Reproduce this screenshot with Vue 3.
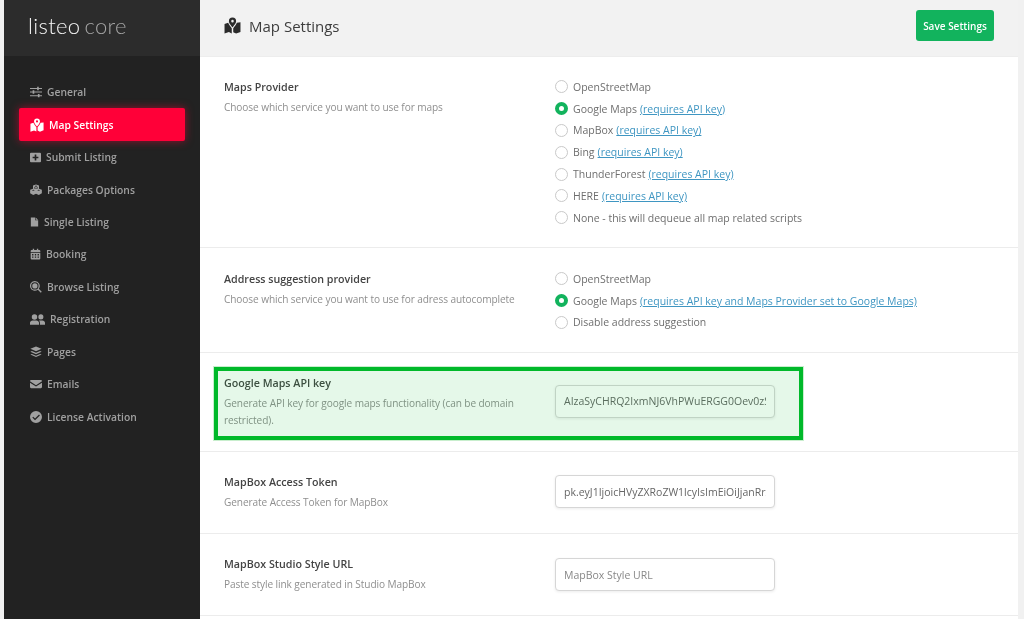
<script setup>
const menu = [
  { label: 'General', icon: 'sliders' },
  { label: 'Map Settings', icon: 'map', active: true },
  { label: 'Submit Listing', icon: 'plus' },
  { label: 'Packages Options', icon: 'cubes' },
  { label: 'Single Listing', icon: 'file' },
  { label: 'Booking', icon: 'calendar' },
  { label: 'Browse Listing', icon: 'search' },
  { label: 'Registration', icon: 'users' },
  { label: 'Pages', icon: 'layers' },
  { label: 'Emails', icon: 'mail' },
  { label: 'License Activation', icon: 'check' }
]
const providers = [
  { name: 'OpenStreetMap' },
  { name: 'Google Maps', link: '(requires API key)', on: true },
  { name: 'MapBox', link: '(requires API key)' },
  { name: 'Bing', link: '(requires API key)' },
  { name: 'ThunderForest', link: '(requires API key)' },
  { name: 'HERE', link: '(requires API key)' },
  { name: 'None - this will dequeue all map related scripts' }
]
const suggest = [
  { name: 'OpenStreetMap' },
  { name: 'Google Maps', link: '(requires API key and Maps Provider set to Google Maps)', on: true },
  { name: 'Disable address suggestion' }
]
</script>

<template>
  <div class="page">
    <aside class="side">
      <div class="brand"><span class="b1">listeo</span><span class="b2">core</span></div>
      <nav class="nav">
        <a v-for="m in menu" :key="m.label" class="item" :class="{ active: m.active }">
          <svg class="ic" :class="'ic-' + m.icon" viewBox="0 0 16 16" fill="currentColor">
            <template v-if="m.icon === 'sliders'">
              <path d="M0 2.600h16v1.300H0zM0 7.400h16v1.300H0zM0 12.200h16v1.300H0z"/>
              <path d="M9.500 1h2.200v4.500H9.500zM3.500 5.800h2.200v4.500H3.500zM10.500 10.600h2.200v4.500h-2.200z"/>
            </template>
            <path v-else-if="m.icon === 'map'" d="M8 0.500a3.400 3.400 0 0 0-3.400 3.400C4.600 6 8 9.600 8 9.600s3.400-3.600 3.400-5.700A3.400 3.400 0 0 0 8 .5zm0 2.200a1.200 1.200 0 1 1 0 2.400 1.200 1.200 0 0 1 0-2.400zM0.500 6.600l3.400-1.200c.8 2 2.400 3.800 3.400 5.100v5L4.600 14.200.5 15.600zM15.500 5v9l-4.100 1.600-2.700-1.200v-3.900c1-1.300 2.700-3.100 3.400-5.100z"/>
            <path v-else-if="m.icon === 'plus'" fill-rule="evenodd" d="M1.500 1h13A1.500 1.500 0 0 1 16 2.500v11a1.500 1.500 0 0 1-1.500 1.500h-13A1.500 1.500 0 0 1 0 13.500v-11A1.500 1.500 0 0 1 1.500 1zM6.800 3.800v3H3.800v2.400h3v3h2.400v-3h3V6.800h-3v-3z"/>
            <path v-else-if="m.icon === 'cubes'" fill-rule="evenodd" d="M8 .5l4 1.500v4.200l3.800 1.500v4.700L11.700 14.500 8 12.900l-3.700 1.600L.2 12.400V7.700L4 6.200V2zM8 2.100L6 2.900l2 .8 2-.8zM4.400 7.500l-2 .8 2 .8 2-.8zm7.200 0l-2 .8 2 .8 2-.8zM5.500 5.800L7.400 6.600V5L5.500 4.200zm5 0V4.200L8.600 5v1.600z"/>
            <path v-else-if="m.icon === 'file'" d="M1.500 0H9v5h5.500v11h-13zM10 0l4.500 4H10z"/>
            <path v-else-if="m.icon === 'calendar'" fill-rule="evenodd" d="M4 .2h2V2h4V.2h2V2h1.500A1.500 1.500 0 0 1 15 3.500V5H1V3.500A1.500 1.500 0 0 1 2.500 2H4zM1 6h14v8.500a1.500 1.500 0 0 1-1.500 1.500h-11A1.500 1.500 0 0 1 1 14.500zm2 2v2h2V8zm4 0v2h2V8zm4 0v2h2V8zm-8 3.500v2h2v-2zm4 0v2h2v-2zm4 0v2h2v-2z"/>
            <path v-else-if="m.icon === 'search'" fill-rule="evenodd" d="M6.500 0a6.500 6.500 0 0 1 5.200 10.400l4 4-1.300 1.300-4-4A6.500 6.500 0 1 1 6.500 0zm0 1.600a4.900 4.900 0 1 0 0 9.800 4.900 4.900 0 0 0 0-9.800zM6.500 3a3.500 3.500 0 1 1 0 7 3.500 3.500 0 0 1 0-7z"/>
            <path v-else-if="m.icon === 'users'" d="M4.800 2.500a2.900 2.900 0 1 1 0 5.800 2.900 2.900 0 0 1 0-5.800zM11.600 2.500a2.700 2.700 0 1 1 0 5.400 2.700 2.700 0 0 1 0-5.400zM0 13.500v-2C0 10 1.300 9 2.800 9h4C8.300 9 9.600 10 9.600 11.500v2zM10.600 13.500v-2c0-.9-.4-1.800-1-2.400.4-.1.8-.1 1.300-.1h2.300C14.700 9 16 10 16 11.500v2z"/>
            <path v-else-if="m.icon === 'layers'" d="M8 .5l7.500 3.300L8 7.100.5 3.800zM2.600 6.700L8 9.100l5.400-2.400 2.100.9L8 11 .5 7.600zM2.600 10.500L8 12.900l5.400-2.400 2.100.9L8 14.800.5 11.400z"/>
            <path v-else-if="m.icon === 'mail'" d="M1.500 2.500h13A1.500 1.500 0 0 1 16 4v.4L8 9.600 0 4.400V4a1.500 1.500 0 0 1 1.500-1.500zM0 6.200l8 5.200 8-5.200V12a1.500 1.500 0 0 1-1.500 1.500h-13A1.500 1.500 0 0 1 0 12z"/>
            <path v-else fill-rule="evenodd" d="M8 0a8 8 0 1 1 0 16A8 8 0 0 1 8 0zm4 4.700L6.700 10 4.300 7.600 3.100 8.800l3.600 3.600 6.500-6.500z"/>
          </svg>
          <span>{{ m.label }}</span>
        </a>
      </nav>
    </aside>

    <main class="main">
      <header class="head">
        <h1 class="title">
          <svg class="title-ic" viewBox="0 0 16 16" fill="currentColor"><path d="M8 0.500a3.400 3.400 0 0 0-3.400 3.400C4.600 6 8 9.600 8 9.600s3.400-3.600 3.400-5.700A3.400 3.400 0 0 0 8 .5zm0 2.200a1.200 1.200 0 1 1 0 2.400 1.200 1.200 0 0 1 0-2.400zM0.500 6.600l3.400-1.200c.8 2 2.400 3.800 3.400 5.100v5L4.600 14.200.5 15.600zM15.500 5v9l-4.100 1.600-2.700-1.200v-3.900c1-1.300 2.700-3.100 3.400-5.100z"/></svg>
          Map Settings
        </h1>
        <button class="save">Save Settings</button>
      </header>

      <section class="row r1">
        <div class="lab"><h3>Maps Provider</h3><p>Choose which service you want to use for maps</p></div>
        <div class="radios">
          <label v-for="p in providers" :key="p.name" class="radio">
            <i class="dot" :class="{ on: p.on }"></i>
            <span>{{ p.name }}</span>
            <a v-if="p.link">{{ p.link }}</a>
          </label>
        </div>
      </section>

      <section class="row r2">
        <div class="lab"><h3>Address suggestion provider</h3><p>Choose which service you want to use for adress autocomplete</p></div>
        <div class="radios">
          <label v-for="p in suggest" :key="p.name" class="radio">
            <i class="dot" :class="{ on: p.on }"></i>
            <span>{{ p.name }}</span>
            <a v-if="p.link">{{ p.link }}</a>
          </label>
        </div>
      </section>

      <section class="row r3">
        <div class="lab"><h3>Google Maps API key</h3><p>Generate API key for google maps functionality (can be domain restricted).</p></div>
        <input class="inp" readonly value="AIzaSyCHRQ2IxmNJ6VhPWuERGG0Oev0zSkX4bLk" />
        <div class="mark"></div>
      </section>

      <section class="row r4">
        <div class="lab"><h3>MapBox Access Token</h3><p>Generate Access Token for MapBox</p></div>
        <input class="inp" readonly value="pk.eyJ1IjoicHVyZXRoZW1lcyIsImEiOiJjanRrZ2J4" />
      </section>

      <section class="row r5">
        <div class="lab"><h3>MapBox Studio Style URL</h3><p>Paste style link generated in Studio MapBox</p></div>
        <input class="inp" placeholder="MapBox Style URL" />
      </section>
    </main>
  </div>
</template>

<style>
html, body { margin: 0; background: #fff; }
</style>

<style scoped>
.page {
  display: flex;
  width: 1024px;
  height: 619px;
  overflow: hidden;
  box-sizing: border-box;
  padding: 0 6px 0 4px;
  background: #f1f1f1;
  font-family: "Open Sans", "Noto Sans", sans-serif;
  font-size: 10.500px;
  filter: blur(.3px);
}
.side { width: 196px; flex: none; background: #222; }
.brand {
  height: 56px;
  box-sizing: border-box;
  padding: 11px 0 0 24px;
  background: #2c2c2c;
  font-family: Lato, sans-serif;
  font-weight: 300;
  font-size: 22px;
  line-height: 30px;
  letter-spacing: .35px;
  display: flex;
  gap: 4px;
}
.b1 { color: #f6f6f6; }
.b2 { color: #a5a5a5; }
.nav { display: flex; flex-direction: column; padding: 20px 15px 0; }
.item {
  height: 32.450px;
  display: flex;
  align-items: center;
  gap: 5px;
  padding-left: 11px;
  color: #a0a0a0;
  font-size: 10.300px;
  font-weight: 600;
  border-radius: 2px;
  white-space: nowrap;
}
.item.active {
  background: #ff0038;
  color: #fff;
  box-shadow: 0 0 8px rgba(255, 0, 56, .55);
}
.ic { width: 12px; height: 12px; flex: none; }
.ic-map { width: 14px; height: 14px; }
.ic-plus { width: 11px; height: 11px; }
.ic-file { width: 9px; height: 12px; }
.ic-calendar { width: 11px; height: 12px; }
.ic-users { width: 15px; height: 15px; margin-right: 0; }
.ic-search { width: 12px; height: 12px; }

.main { width: 818px; flex: none; background: #fff; }
.head {
  height: 57px;
  box-sizing: border-box;
  border-bottom: 1px solid #ededed;
  background: #f2f2f2;
  display: flex;
  align-items: center;
  justify-content: space-between;
  padding: 0 24px 5px;
}
.title {
  margin: 0;
  display: flex;
  align-items: center;
  gap: 8px;
  font-size: 15px;
  font-weight: 400;
  color: #3d3d3d;
}
.title-ic { width: 17px; height: 17px; color: #2b2b2b; }
.save {
  width: 78px;
  height: 31px;
  padding: 0;
  border: 0;
  border-radius: 3px;
  background: #12b35d;
  color: #fff;
  font: 600 10px "Open Sans", sans-serif;
}

.row {
  position: relative;
  display: flex;
  align-items: center;
  box-sizing: border-box;
  padding: 0 24px;
  border-bottom: 1px solid #ececec;
}
.r1 { height: 191px; }
.r2 { height: 105px; }
.r3 { height: 99px; }
.r4 { height: 82px; }
.r5 { height: 82px; }
.lab { width: 331px; flex: none; align-self: flex-start; padding: 22px 30px 0 0; box-sizing: border-box; }
.r2 .lab { padding-top: 23px; }
.lab h3 { margin: 0; font-size: 10.700px; line-height: 16px; font-weight: 600; color: #444; }
.lab p { margin: 4px 0 0; line-height: 17px; color: #8f8f8f; font-size: 10.100px; letter-spacing: -.09px; }
.radios { display: flex; flex-direction: column; align-self: flex-start; padding-top: 19px; }
.r2 .radios { padding-top: 20px; }
.radio { display: flex; align-items: center; height: 21.800px; color: #6e6e6e; white-space: nowrap; }
.radio a { margin-left: 3px; color: #3f96c2; text-decoration: underline; }
.dot {
  width: 13px;
  height: 13px;
  box-sizing: border-box;
  margin-right: 5px;
  border: 1.500px solid #c9c9c9;
  border-radius: 50%;
  background: #fff;
}
.dot.on { border: 4px solid #12b35d; }
.inp {
  width: 220px;
  height: 33px;
  box-sizing: border-box;
  padding: 0 8px;
  border: 1px solid #d6d6d6;
  border-radius: 4px;
  background: #fff;
  box-shadow: 0 1px 3px rgba(0, 0, 0, .08);
  color: #666;
  font: 10.500px "Open Sans", sans-serif;
  outline: none;
}
.r3 .inp, .r4 .inp { margin-bottom: 2px; }
.inp::placeholder { color: #888; opacity: 1; }
.mark {
  position: absolute;
  left: 14px;
  top: 14px;
  width: 589px;
  height: 73px;
  box-sizing: border-box;
  border: 4px solid #00b92a;
  outline: 1px solid #c8eecd;
  background: rgba(0, 185, 40, .1);
  pointer-events: none;
}
</style>
